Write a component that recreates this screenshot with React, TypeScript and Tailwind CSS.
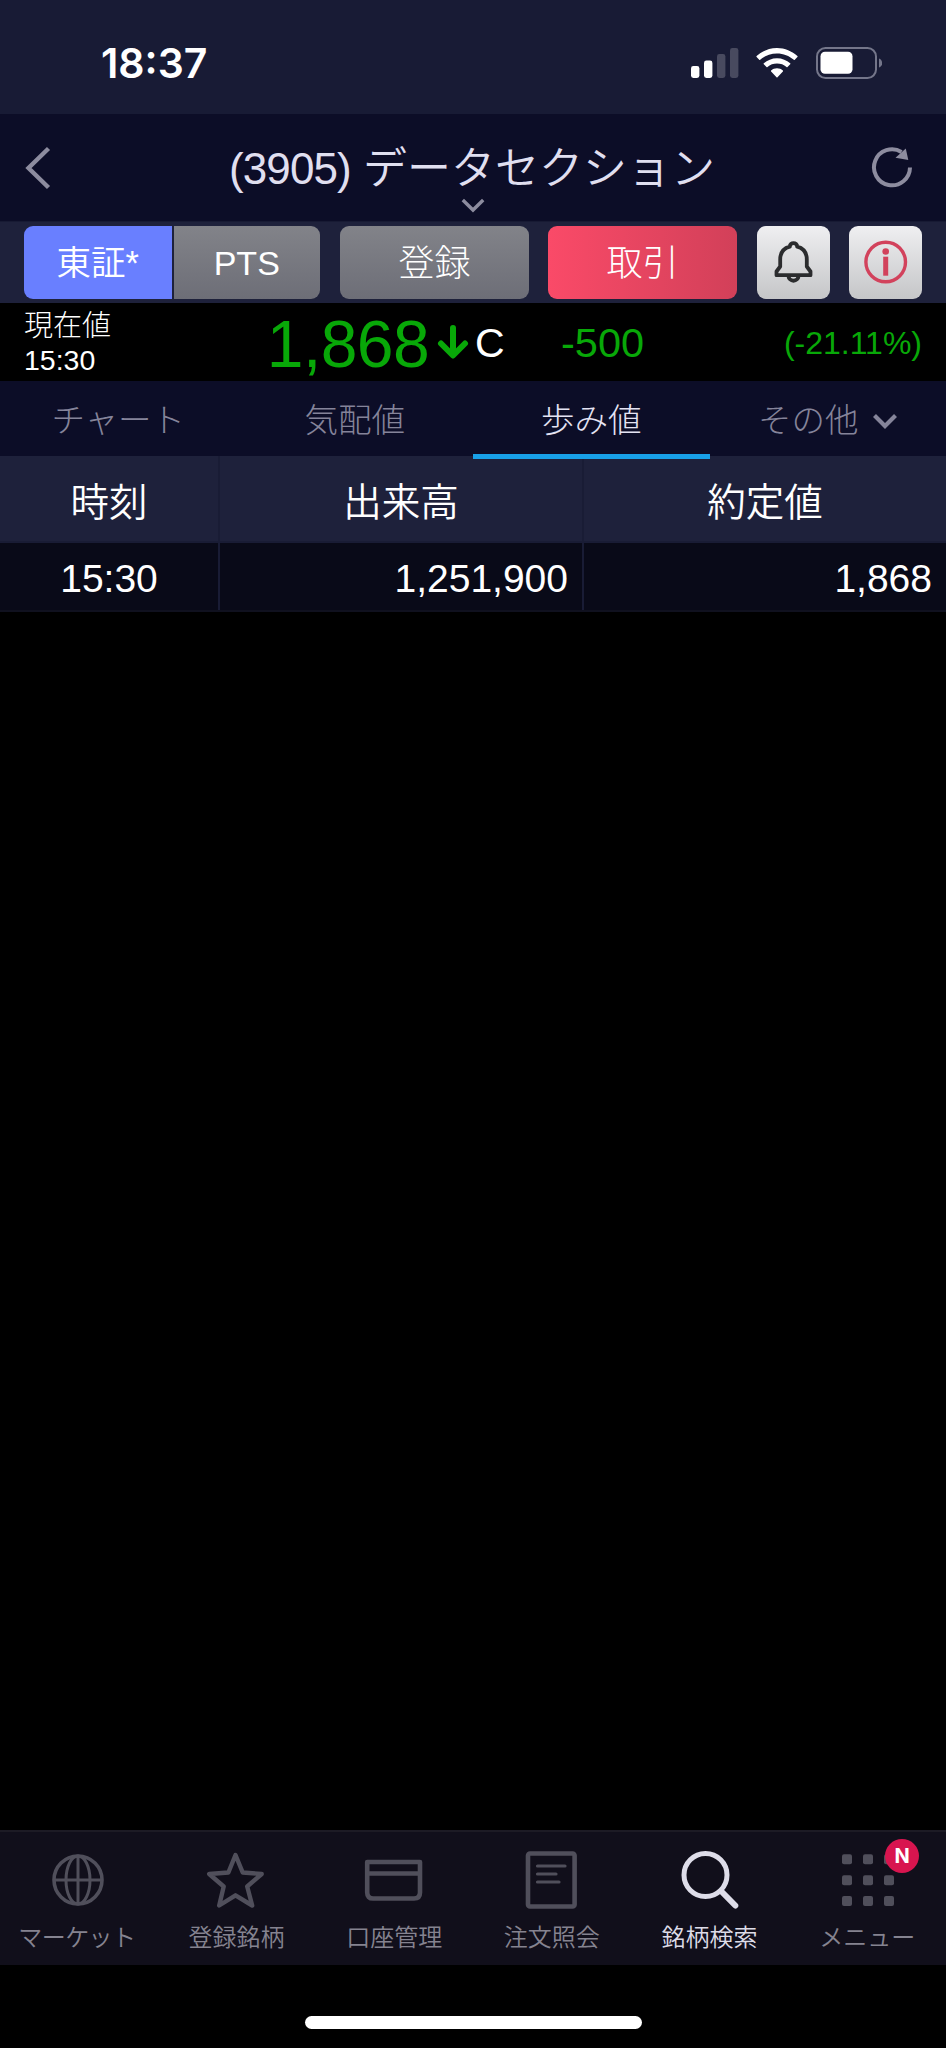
import type { ReactNode } from 'react';

function StatusBar() {
  return (
    <div className="flex h-[114px] items-start justify-between bg-[#181b35] pt-[42px] pr-[64px] pl-[101px]">
      <div className="font-['Inter'] text-[41px] leading-[43px] font-semibold text-white">18:37</div>
      <div className="flex items-start pt-[5px]">
        <svg className="h-[32px] w-[48px]" viewBox="0 0 48 32">
          <rect x="0" y="19" width="8.4" height="12" rx="2.4" fill="#fff" />
          <rect x="13" y="13.5" width="8.4" height="17.5" rx="2.4" fill="#fff" />
          <rect x="26" y="7" width="8.4" height="24" rx="2.4" fill="#484a5f" />
          <rect x="39" y="1" width="8.4" height="30" rx="2.4" fill="#484a5f" />
        </svg>
        <svg className="ml-[17px] h-[32px] w-[42px]" viewBox="0 0 42 32">
          <path
            fill="#fff"
            d="M21 1C13 1 6 4.200.6 9.100Q.1 9.600.6 10.100L3.200 12.700Q3.700 13.200 4.200 12.700C8.800 8.700 14.600 6.400 21 6.400S33.200 8.700 37.800 12.700Q38.300 13.200 38.800 12.700L41.400 10.100Q41.900 9.600 41.400 9.100C36 4.200 29 1 21 1ZM21 11.200C15.900 11.200 11.300 13.200 7.800 16.300Q7.300 16.800 7.800 17.300L10.500 19.900Q11 20.400 11.500 19.900C14.100 17.700 17.400 16.500 21 16.500S27.900 17.700 30.500 19.900Q31 20.400 31.500 19.900L34.200 17.300Q34.700 16.800 34.200 16.300C30.700 13.200 26.100 11.200 21 11.200ZM21 21.300C18.800 21.300 16.700 22.100 15.100 23.400Q14.600 23.900 15.100 24.400L20.500 30.200Q21 30.700 21.500 30.200L26.900 24.400Q27.400 23.900 26.900 23.400C25.300 22.100 23.200 21.300 21 21.300Z"
          />
        </svg>
        <svg className="ml-[18px] h-[32px] w-[66px]" viewBox="0 0 66 32">
          <rect x="1" y="1" width="59" height="30" rx="8.500" fill="none" stroke="#74768a" strokeWidth="2" />
          <rect x="4.500" y="4.800" width="32" height="22" rx="4.500" fill="#fff" />
          <path d="M63 11.500C67.300 13.200 67.300 18.800 63 20.500Z" fill="#74768a" />
        </svg>
      </div>
    </div>
  );
}

function TitleBar() {
  return (
    <div className="grid h-[107px] grid-cols-[1fr_520px_1fr] bg-[#0c0d27]">
      <svg className="mt-[32px] ml-[25px] h-[44px] w-[26px]" viewBox="0 0 26 44">
        <path d="M23.500 2.500L3.500 22L23.500 41.500" fill="none" stroke="#8d8c9f" strokeWidth="4.400" />
      </svg>
      <div className="flex flex-col items-center pt-[29px]">
        <h1 className="h-[52px] pr-[2px] text-[44px] leading-[52px] font-[350] whitespace-nowrap text-[#e0dff0]">
          <span className="tracking-[-0.9px]">(3905)</span> データセクション
        </h1>
        <svg className="mt-[3px] h-[16px] w-[24px]" viewBox="0 0 24 16">
          <path d="M1.800 2L12 12L22.200 2" fill="none" stroke="#8d8c9f" strokeWidth="3.400" />
        </svg>
      </div>
      <svg className="mt-[32px] mr-[33px] h-[42px] w-[42px] justify-self-end" viewBox="0 0 42 42">
        <path d="M39 21.500A18 18 0 1 1 30.500 6" fill="none" stroke="#8d8c9f" strokeWidth="4" />
        <path d="M34.800 2.500L37.300 14L24.500 11.800Z" fill="#8d8c9f" />
      </svg>
    </div>
  );
}

function Actions() {
  return (
    <div className="flex h-[82px] items-start border-t border-[#171a33] bg-[#1e213b] pt-[4px] pl-[24px] text-[34.5px] leading-none text-white">
      <button className="flex h-[73px] w-[147.500px] items-center justify-center rounded-l-[9px] bg-[#697fff] pt-[2px] font-[350]">東証*</button>
      <button className="ml-[2px] flex h-[73px] w-[146.500px] items-center justify-center rounded-r-[9px] bg-linear-to-b from-[#828389] to-[#6d6e77] text-[34px]">
        PTS
      </button>
      <button className="ml-[20px] flex h-[73px] w-[189px] items-center justify-center rounded-[9px] bg-linear-to-b from-[#828389] to-[#6d6e77] pt-[3px] text-[36px]">
        登録
      </button>
      <button className="ml-[19px] flex h-[73px] w-[189px] items-center justify-center rounded-[9px] bg-linear-to-r from-[#fa4a68] to-[#d24059] pt-[3px] text-[36px]">
        取引
      </button>
      <button className="ml-[20px] flex h-[73px] w-[73px] justify-center rounded-[9px] bg-linear-to-b from-[#efeff1] to-[#c5c6c8] pt-[14px]">
        <svg className="h-[44px] w-[40px]" viewBox="0 0 40 44" fill="none" stroke="#2b2c2e" strokeWidth="3.800" strokeLinejoin="round">
          <path d="M15.800 6.700C15.800 1.800 23.200 1.800 23.200 6.700C30 8.500 32.800 13.800 32.800 19.500V26.500L36.500 31.500V35.200H2.500V31.500L6.200 26.500V19.500C6.200 13.800 9 8.500 15.800 6.700Z" />
          <path d="M14.300 35.500C15 42.500 24 42.500 24.700 35.500" />
        </svg>
      </button>
      <button className="ml-[19px] flex h-[73px] w-[73px] justify-center rounded-[9px] bg-linear-to-b from-[#efeff1] to-[#c5c6c8] pt-[14px]">
        <svg className="h-[44px] w-[44px]" viewBox="0 0 44 44">
          <circle cx="21.700" cy="22" r="19.800" fill="none" stroke="#d2425c" strokeWidth="3.400" />
          <circle cx="21.700" cy="11.500" r="3.300" fill="#d2425c" />
          <rect x="19.200" y="16.700" width="5" height="19" fill="#d2425c" />
        </svg>
      </button>
    </div>
  );
}

function PriceRow() {
  return (
    <div className="flex h-[78px] items-start bg-black text-[#08a808]">
      <div className="w-[238px] pl-[24px] text-white">
        <div className="pt-[7px] text-[29px] leading-[33px]">現在値</div>
        <div className="text-[28.5px] leading-[34px]">15:30</div>
      </div>
      <div className="w-[191px] pt-[3px] text-right text-[66px] leading-[76px] tracking-[-0.6px]">1,868</div>
      <svg className="mt-[21px] ml-[8px] h-[37px] w-[32px]" viewBox="0 0 32 37">
        <path d="M16 4V30M4 19.500L16 31.500L28 19.500" fill="none" stroke="#08a808" strokeWidth="6" strokeLinecap="round" strokeLinejoin="round" />
      </svg>
      <div className="ml-[6px] w-[86px] pt-[16px] text-[41px] leading-[48px] text-white">C</div>
      <div className="pt-[16px] text-[41.5px] leading-[48px]">-500</div>
      <div className="ml-auto pt-[20px] pr-[24px] text-[32px] leading-[40px]">(-21.11%)</div>
    </div>
  );
}

function Tabs() {
  const base = 'flex w-1/4 justify-center pt-[16px] text-[33.5px] leading-[48px]';
  return (
    <div className="flex h-[75px] bg-[#0c0d27] text-[#85849a]">
      <div className={base}>チャート</div>
      <div className={base}>気配値</div>
      <div className="z-10 flex h-[78px] w-1/4 justify-center border-b-[5px] border-[#18a0e8] pt-[16px] text-[33.5px] leading-[48px] text-[#e4e3f3]">
        歩み値
      </div>
      <div className={base}>
        その他
        <svg className="mt-[16px] ml-[13px] h-[17px] w-[26px]" viewBox="0 0 26 17">
          <path d="M2.500 2.500L13 13L23.500 2.500" fill="none" stroke="#85849a" strokeWidth="4.200" />
        </svg>
      </div>
    </div>
  );
}

function TradeTable() {
  return (
    <div className="text-white">
      <div className="grid h-[87px] grid-cols-[220px_364px_362px] border-b-2 border-[#191c35] bg-[#1e213b] text-center text-[38.5px] leading-[94px] font-[350]">
        <div className="h-[85px] border-r-2 border-[#191c35]">時刻</div>
        <div className="h-[85px] border-r-2 border-[#191c35]">出来高</div>
        <div>約定値</div>
      </div>
      <div className="grid h-[69px] grid-cols-[220px_364px_362px] border-b-2 border-[#10111f] bg-[#090a18] text-[39px] leading-[72px]">
        <div className="h-[67px] border-r-2 border-[#191c35] text-center">15:30</div>
        <div className="h-[67px] border-r-2 border-[#191c35] pr-[14px] text-right">1,251,900</div>
        <div className="pr-[14px] text-right">1,868</div>
      </div>
    </div>
  );
}

function NavItem({ label, active, tight, children }: { label: string; active?: boolean; tight?: boolean; children: ReactNode }) {
  return (
    <div className={active ? 'flex flex-1 flex-col items-center text-[#dddce8]' : 'flex flex-1 flex-col items-center text-[#858390]'}>
      <svg className={active ? 'mt-[18px] h-[62px] w-[62px] text-[#dedde9]' : 'mt-[18px] h-[62px] w-[62px] text-[#504f5b]'} viewBox="0 0 62 62" fill="none" stroke="currentColor">
        {children}
      </svg>
      <div
        className={
          tight
            ? 'mt-[8px] pr-[4px] text-[24px] leading-[36px] font-[350] tracking-[-0.6px] whitespace-nowrap'
            : 'mt-[8px] text-[24px] leading-[36px] font-[350] whitespace-nowrap'
        }
      >
        {label}
      </div>
    </div>
  );
}

function BottomNav() {
  return (
    <nav className="flex h-[135px] border-t-2 border-[#1d1b25] bg-[#110f1b]">
      <NavItem label="マーケット" tight>
        <g strokeWidth="3">
          <circle cx="30" cy="30" r="24" strokeWidth="3.600" />
          <ellipse cx="30" cy="30" rx="12" ry="24" />
          <path d="M30 6V54M6 30H54" />
        </g>
      </NavItem>
      <NavItem label="登録銘柄">
        <path strokeWidth="4.400" strokeLinejoin="round" d="M29.500 5L36.700 22.500L55.700 24L41.200 36.500L46.200 55.500L29.500 45.300L13.200 55.500L17.700 36.500L3.200 24L22.400 22.500Z" />
      </NavItem>
      <NavItem label="口座管理">
        <path strokeWidth="4.600" strokeLinejoin="round" d="M4.200 12H57V42.500Q57 48.500 51 48.500H10.200Q4.200 48.500 4.200 42.500ZM4.200 23.500H57" />
      </NavItem>
      <NavItem label="注文照会">
        <rect x="7" y="3.500" width="46.600" height="53" rx="2" strokeWidth="4.600" />
        <path strokeWidth="3.200" strokeLinecap="round" d="M16.500 16H44M16.500 24H35M16.500 32H38" />
      </NavItem>
      <NavItem label="銘柄検索" active>
        <circle cx="26.500" cy="25" r="21.500" strokeWidth="5" />
        <path strokeWidth="6" strokeLinecap="round" d="M43.500 42.500L56.300 55.500" />
      </NavItem>
      <div className="relative flex flex-1 flex-col">
        <NavItem label="メニュー">
          <g fill="currentColor" stroke="none">
            {[4.3, 25.2, 46].map((y) => [6, 27, 48].map((x) => <rect key={`${x}-${y}`} x={x} y={y} width="10" height="10" rx="2" />))}
          </g>
        </NavItem>
        <span className="absolute top-[7px] right-[27px] flex h-[34px] w-[34px] items-center justify-center rounded-full bg-[#d8154f] font-['Inter'] text-[20px] leading-none font-bold text-white">
          N
        </span>
      </div>
    </nav>
  );
}

export default function App() {
  return (
    <div className="flex h-[2048px] w-[946px] flex-col overflow-hidden bg-black font-['Liberation_Sans','Noto_Sans_CJK_JP',sans-serif] font-light">
      <StatusBar />
      <TitleBar />
      <Actions />
      <PriceRow />
      <Tabs />
      <TradeTable />
      <div className="flex-1" />
      <BottomNav />
      <div className="flex h-[83px] items-start justify-center pt-[51px]">
        <div className="h-[13px] w-[337px] rounded-full bg-white" />
      </div>
    </div>
  );
}
